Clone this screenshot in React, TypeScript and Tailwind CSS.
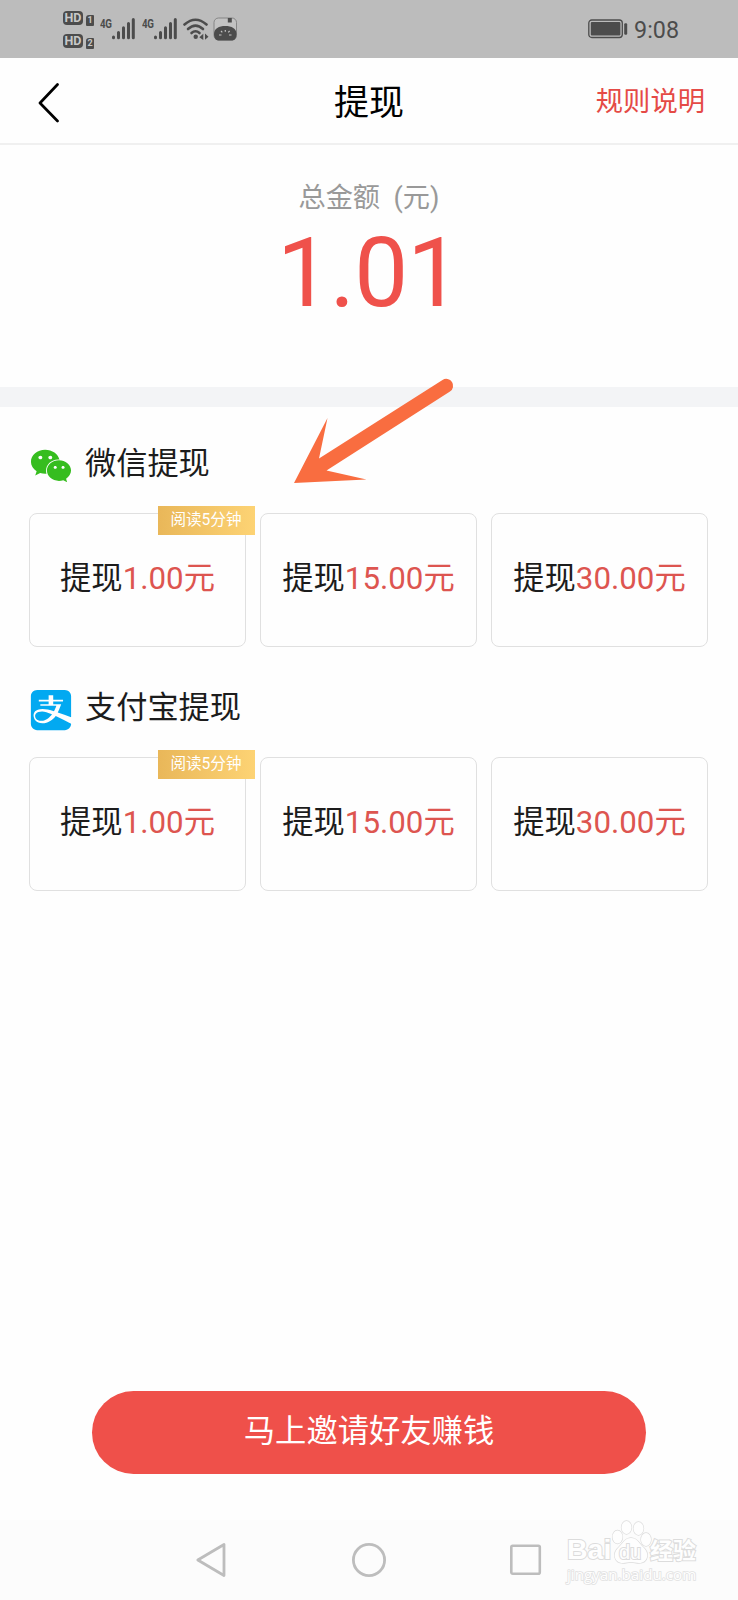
import { ReactNode } from "react";
import { FaAlipay, FaWeixin } from "react-icons/fa";

interface Option {
    amount: string;
    tag?: string;
}

const OPTIONS: Option[] = [
    { amount: "1.00元", tag: "阅读5分钟" },
    { amount: "15.00元" },
    { amount: "30.00元" },
];

const HdBadge = ({ sim }: { sim: string }) => (
    <div className="flex items-end gap-[3px]">
        <span className="flex h-[14px] w-5 items-center justify-center rounded-[4px] bg-[#4c4c4c] pt-px text-[12.5px] leading-none font-bold text-[#c8c8c8]">
            HD
        </span>
        <span className="-mb-[1px] flex h-[11px] w-[8px] items-center justify-center rounded-[1px] rounded-tl-[3px] bg-[#4c4c4c] text-[9px] leading-none font-bold text-[#c8c8c8]">
            {sim}
        </span>
    </div>
);

const Signal = () => (
    <div className="flex w-[35px] items-start">
        <span className="w-3 origin-left scale-x-75 text-[13px] leading-[11px] font-bold tracking-[-0.3px]">4G</span>
        <svg width="23" height="22" viewBox="0 0 23 22" stroke="currentColor" strokeWidth="3" strokeLinecap="round">
            <path d="M1.5 19.7v-.6M6.5 19.7v-5.2M11.5 19.7V9.7M16.5 19.7V5.5M21.3 19.7V1.6" />
        </svg>
    </div>
);

const StatusBar = () => (
    <div className="flex h-[58px] items-center bg-[#bcbcbc] text-[#4c4c4c]">
        <div className="ml-[63px] flex w-[31px] flex-col gap-[9px]">
            <HdBadge sim="1" />
            <HdBadge sim="2" />
        </div>
        <div className="ml-[6px] flex gap-[7px]">
            <Signal />
            <Signal />
        </div>
        <svg className="ml-[6px]" width="26" height="24" viewBox="0 0 26 24" fill="none" stroke="currentColor" strokeLinecap="round">
            <path d="M1.5 7.5Q12.5 -2 23.5 7.5" strokeWidth="2.6" />
            <path d="M5 12Q12.5 5.2 20 12" strokeWidth="2.6" />
            <path d="M8.5 16Q12.5 12.5 16.5 16" strokeWidth="2.6" />
            <circle cx="12.7" cy="19.8" r="2.2" fill="currentColor" stroke="none" />
            <path d="M20.3 16.7v6.2l-4-2.6zM22 16.5v6.2l3.5-3z" fill="currentColor" stroke="none" />
        </svg>
        <svg className="ml-[4px]" width="25" height="24" viewBox="0 0 25 24">
            <rect x="1" y="1" width="22.5" height="22" rx="4.5" fill="#c2c2c2" stroke="#777" strokeWidth=".8" />
            <path d="M1 17C1 11.5 6 9 12.3 9s11.2 2.5 11.2 8c0 4.5-2 6.5-5 6.5H6c-3 0-5-2-5-6.5Z" fill="currentColor" />
            <path d="M14.8 1h4v4.5h-4z" fill="currentColor" />
            <path d="M6 18h2.5M16 18h2.5M8 14l1.3 1.3M16.6 14l-1.3 1.3M12.3 13v1.8" stroke="#c2c2c2" strokeWidth="1.2" />
        </svg>
        <svg className="ml-auto" width="40" height="20" viewBox="0 0 40 20">
            <rect x=".8" y="1" width="33.5" height="17.5" rx="3" fill="none" stroke="currentColor" strokeWidth="1.3" />
            <rect x="2.8" y="3" width="29.6" height="13.5" rx="1" fill="currentColor" />
            <rect x="36.2" y="4.2" width="3" height="11.5" rx="1.2" fill="currentColor" />
        </svg>
        <span className="mr-[59px] ml-[6px] pt-[2px] text-[23.3px]">9:08</span>
    </div>
);

const Header = () => (
    <header className="grid h-[87px] grid-cols-3 items-center border-b-2 border-[#f0f0f0] pt-[5px]">
        <svg className="ml-[37px]" width="22" height="40" viewBox="0 0 22 40" fill="none" stroke="#000" strokeWidth="2.7" strokeLinecap="round" strokeLinejoin="round">
            <path d="M20.5 1.5 3 20l17.5 18" />
        </svg>
        <h1 className="pt-[2px] text-center text-[35px] text-black">提现</h1>
        <a className="mr-[33px] pb-[2px] text-right text-[27.3px] text-[#e54a46]">规则说明</a>
    </header>
);

const OptionCard = ({ amount, tag }: Option) => (
    <div className="relative flex h-[134px] items-center justify-center rounded-lg border-[1.5px] border-[#e0e0e0] pb-[2px] text-[31.3px] whitespace-nowrap">
        <span>提现</span>
        <span className="text-[#dd5550]">{amount}</span>
        {tag && (
            <span className="absolute -top-[8px] -right-[10px] flex h-[29px] w-[97px] items-center justify-center bg-linear-to-r from-[#e9b759] to-[#fdd374] pr-[1px] text-[15.6px] text-white">
                {tag}
            </span>
        )}
    </div>
);

const Section = ({ icon, title }: { icon: ReactNode; title: string }) => (
    <section className="pr-[30px] pl-[29px]">
        <div className="flex h-[66px] items-center">
            <span className="flex w-[56px] pt-[7px]">{icon}</span>
            <h2 className="pt-[5px] text-[31.2px]">{title}</h2>
        </div>
        <div className="mt-[18px] grid grid-cols-3 gap-[14px]">
            {OPTIONS.map(option => (
                <OptionCard key={option.amount} {...option} />
            ))}
        </div>
    </section>
);

const NavBar = () => (
    <nav className="relative flex h-20 items-center bg-[#fcfcfc] text-[#bdbdbd]">
        <svg className="ml-[195px]" width="32" height="36" viewBox="0 0 32 36" fill="none" stroke="currentColor" strokeWidth="2.8" strokeLinejoin="round">
            <path d="M29 2.5v31L2.8 18z" />
        </svg>
        <svg className="ml-[124px]" width="36" height="36" viewBox="0 0 36 36" fill="none" stroke="currentColor" strokeWidth="2.8">
            <circle cx="18" cy="18" r="15.6" />
        </svg>
        <svg className="ml-[122px]" width="33" height="33" viewBox="0 0 33 33" fill="none" stroke="currentColor" strokeWidth="2.6">
            <rect x="2.3" y="1.8" width="28.5" height="28" rx="1.5" />
        </svg>
        {/* Watermark */}
        <div className="absolute top-0 left-[567px] font-['Liberation_Sans','Noto_Sans_CJK_SC',sans-serif] text-[#fefefe] [paint-order:stroke]">
            <svg className="absolute top-0 left-[42px]" width="46" height="48" viewBox="0 0 46 48" fill="#fefefe" stroke="#dcdcdc" strokeWidth="1.3">
                <ellipse cx="8.5" cy="17" rx="5" ry="6.5" />
                <ellipse cx="17.5" cy="7.5" rx="5" ry="6.5" />
                <ellipse cx="29.5" cy="8.5" rx="5" ry="6.5" />
                <ellipse cx="37" cy="19.5" rx="5" ry="6.5" />
                <path d="M22 18c6 0 8 5 12 9 7 6 5 16-4 16-3 0-5-1-8-1s-5 1-8 1c-9 0-11-10-4-16 4-4 6-9 12-9Z" />
            </svg>
            <div className="relative flex h-[44px] items-end font-bold whitespace-nowrap [-webkit-text-stroke:2px_#dcdcdc]">
                <span className="w-[52px] text-[28.5px] leading-[29px]">Bai</span>
                <span className="w-[31px] text-[20px] leading-[24px] font-normal">du</span>
                <span className="text-[23px] leading-[25px]">经验</span>
            </div>
            <div className="relative font-['Open_Sans'] text-[15.2px] leading-[20px] [-webkit-text-stroke:1.6px_#e1e1e1]">
                jingyan.baidu.com
            </div>
        </div>
    </nav>
);

export default function App() {
    return (
        <div className="relative flex h-[1600px] w-[738px] flex-col overflow-hidden bg-[#fefefe] font-[Roboto,'Noto_Sans_CJK_SC',sans-serif] text-[#1c1c1c]">
            <StatusBar />
            <Header />
            <div className="flex h-[242px] flex-col items-center pt-[33px]">
                <span className="text-[27.2px] leading-10 whitespace-pre text-[#999]">{"总金额  (元)"}</span>
                <span className="pr-[1px] text-[96px] leading-[110px] tracking-[-1px] text-[#ef514b]">1.01</span>
            </div>
            <div className="h-5 shrink-0 bg-[#f3f4f6]" />

            <main className="flex flex-1 flex-col">
                <div className="h-[22px]" />
                <Section title="微信提现" icon={<FaWeixin size={42} color="#36bd1f" className="ml-px" />} />
                <div className="h-[26px]" />
                <Section title="支付宝提现" icon={<FaAlipay size={46} color="#02a9f1" className="-ml-px" />} />
                <button className="mx-auto mt-auto mb-[46px] h-[83px] w-[554px] rounded-full bg-[#ef504a] pb-[1px] text-[31.3px] text-white">
                    马上邀请好友赚钱
                </button>
            </main>

            <NavBar />

            {/* Pointer over the wechat options */}
            <svg className="absolute top-[370px] left-[285px]" width="180" height="120" viewBox="285 370 180 120" fill="#f96d40">
                <path d="M294 483 327.5 418 319 458.5 442.5 380a6.7 6.7 0 0 1 7.5 11.5L326.5 470.5 366.5 479.5Z" />
            </svg>
        </div>
    );
}
